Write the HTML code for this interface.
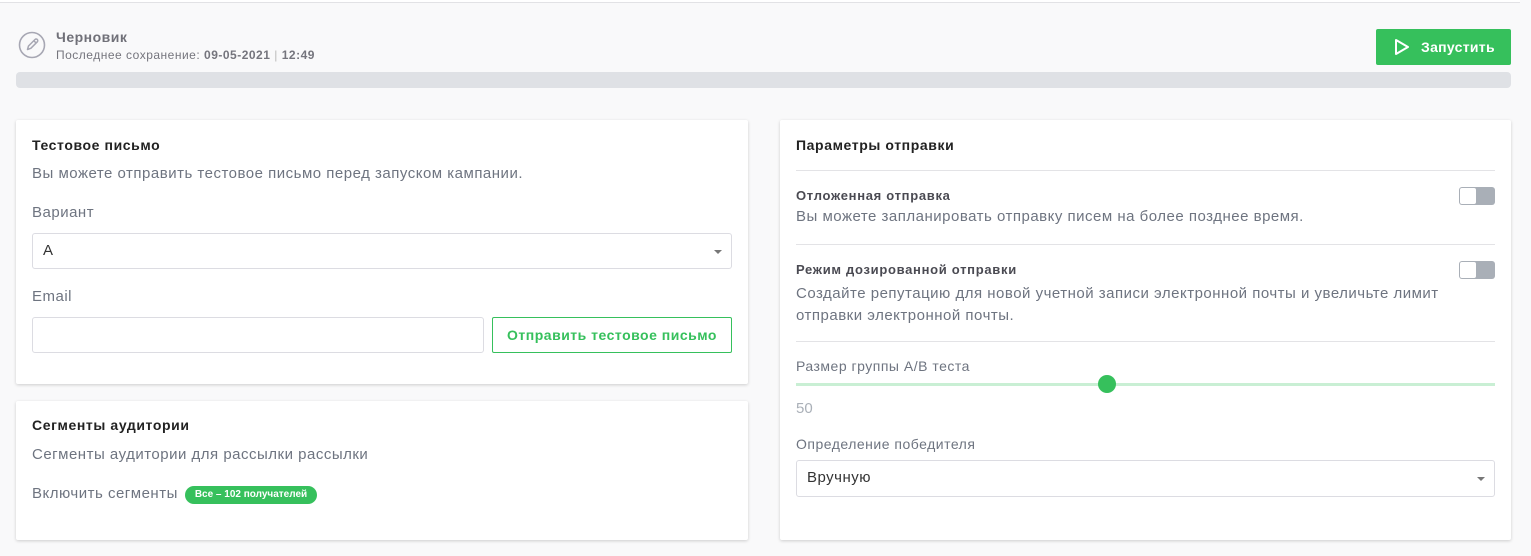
<!DOCTYPE html>
<html><head><meta charset="utf-8"><style>
*{box-sizing:border-box;margin:0;padding:0}
body{width:1531px;height:556px;background:#f9f9fa;font-family:"Liberation Sans",sans-serif;position:relative;overflow:hidden;color:#1f2024}
.a{position:absolute}
.topline{left:0;top:0;width:1520px;height:3px;background:#fff;border-bottom:1px solid #e2e2e5}
.card{background:#fff;box-shadow:0 1px 3px rgba(0,0,0,.18);border-radius:2px}
.h{font-size:14px;font-weight:bold;color:#222;letter-spacing:.6px}
.t{font-size:15px;color:#6e7480;white-space:nowrap;letter-spacing:.5px}
.s{font-size:14px;color:#6e7480;white-space:nowrap;letter-spacing:.5px}
.b{font-size:13px;font-weight:bold;color:#4a4a52;letter-spacing:.7px}
.sel{border:1px solid #dcdce2;border-radius:3px;background:#fff;font-size:15px;color:#333;padding-left:10px;line-height:34px;letter-spacing:.5px}
.sel:after{content:"";position:absolute;right:9px;top:16px;border:4px solid transparent;border-top:4px solid #777;border-bottom:0}
.hr{height:1px;background:#e3e3e6}
.tg{width:36px;height:18px;border-radius:3px;background:#a9afb7}
.tg:before{content:"";position:absolute;left:1px;top:1px;width:16px;height:16px;background:#fff;border-radius:2px}
</style></head><body>
<div class="a topline"></div>
<svg class="a" style="left:18px;top:31px" width="28" height="28" viewBox="0 0 28 28"><circle cx="14" cy="14" r="12.5" fill="none" stroke="#a7a7b3" stroke-width="1.6"/><path d="M9.5 18.5l1-3.5 6.5-6.5a1.6 1.6 0 0 1 2.3 2.3l-6.5 6.5z M15.8 9.7l2.3 2.3" fill="none" stroke="#a7a7b3" stroke-width="1.5" stroke-linejoin="round"/></svg>
<div class="a" style="left:56px;top:29px;font-size:14px;font-weight:bold;color:#707078;letter-spacing:.5px">Черновик</div>
<div class="a" style="left:56px;top:48px;font-size:12px;color:#75757d;white-space:nowrap;letter-spacing:.5px">Последнее сохранение: <b>09-05-2021</b> <span style="color:#bbb">|</span> <b>12:49</b></div>
<div class="a" style="left:16px;top:72px;width:1495px;height:16px;background:#dfe1e5;border-radius:4px"></div>
<div class="a" style="left:1376px;top:29px;width:135px;height:36px;background:#36c05c;border-radius:2px;color:#fff;font-size:14px;font-weight:bold;letter-spacing:.3px">
<svg class="a" style="left:18px;top:9px" width="16" height="18" viewBox="0 0 16 18"><path d="M2 2L14 9L2 16Z" fill="none" stroke="#fff" stroke-width="2" stroke-linejoin="round"/></svg>
<span class="a" style="left:45px;top:10px">Запустить</span></div>

<div class="a card" style="left:16px;top:120px;width:732px;height:264px"></div>
<div class="a h" style="left:32px;top:137px">Тестовое письмо</div>
<div class="a t" style="left:32px;top:165px">Вы можете отправить тестовое письмо перед запуском кампании.</div>
<div class="a t" style="left:32px;top:204px">Вариант</div>
<div class="a sel" style="left:32px;top:233px;width:700px;height:36px">A</div>
<div class="a t" style="left:32px;top:288px">Email</div>
<div class="a" style="left:32px;top:317px;width:452px;height:36px;border:1px solid #dcdce2;border-radius:3px"></div>
<div class="a" style="left:492px;top:317px;width:240px;height:36px;border:1px solid #36c05c;border-radius:2px;color:#36c05c;font-size:14px;font-weight:bold;text-align:center;line-height:34px;letter-spacing:.5px">Отправить тестовое письмо</div>

<div class="a card" style="left:16px;top:401px;width:732px;height:139px"></div>
<div class="a h" style="left:32px;top:417px">Сегменты аудитории</div>
<div class="a t" style="left:32px;top:446px">Сегменты аудитории для рассылки рассылки</div>
<div class="a t" style="left:32px;top:485px">Включить сегменты</div>
<div class="a" style="left:185px;top:486px;width:132px;height:18px;border-radius:9px;background:#36c05c;color:#fff;font-size:10px;font-weight:bold;text-align:center;line-height:18px">Все – 102 получателей</div>

<div class="a card" style="left:780px;top:120px;width:731px;height:420px"></div>
<div class="a h" style="left:796px;top:137px">Параметры отправки</div>
<div class="a hr" style="left:796px;top:170px;width:699px"></div>
<div class="a b" style="left:796px;top:188px">Отложенная отправка</div>
<div class="a t" style="left:796px;top:208px">Вы можете запланировать отправку писем на более позднее время.</div>
<div class="a tg" style="left:1459px;top:187px"></div>
<div class="a hr" style="left:796px;top:244px;width:699px"></div>
<div class="a b" style="left:796px;top:262px">Режим дозированной отправки</div>
<div class="a t" style="left:796px;top:283px;line-height:22px">Создайте репутацию для новой учетной записи электронной почты и увеличьте лимит<br>отправки электронной почты.</div>
<div class="a tg" style="left:1459px;top:261px"></div>
<div class="a hr" style="left:796px;top:341px;width:699px"></div>
<div class="a s" style="left:796px;top:358px">Размер группы A/B теста</div>
<div class="a" style="left:796px;top:383px;width:699px;height:3px;background:#c9efd4"></div>
<div class="a" style="left:1098px;top:375px;width:18px;height:18px;border-radius:50%;background:#36c05c"></div>
<div class="a" style="left:796px;top:400px;font-size:15px;color:#aab0b8">50</div>
<div class="a s" style="left:796px;top:436px">Определение победителя</div>
<div class="a sel" style="left:796px;top:460px;width:699px;height:37px">Вручную</div>
</body></html>
